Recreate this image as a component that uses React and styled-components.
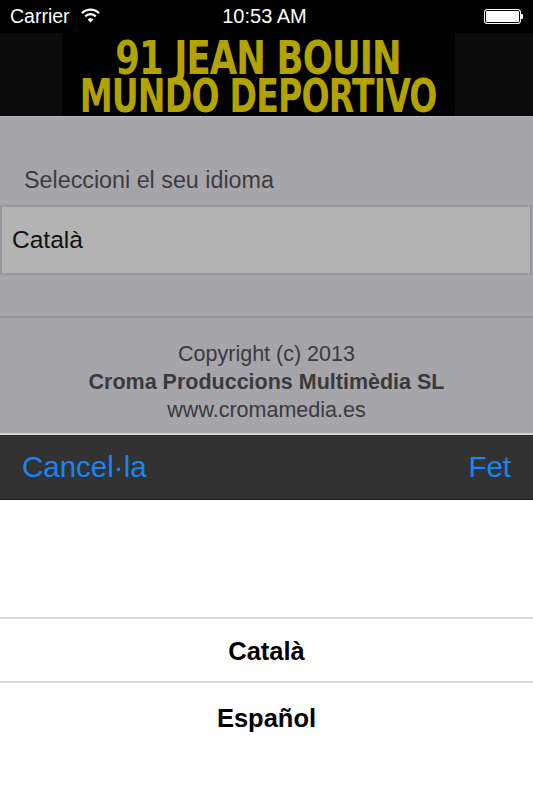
import styled, { createGlobalStyle } from "styled-components";

const GlobalStyle = createGlobalStyle`
	*, *::before, *::after {
		box-sizing: border-box;
	}
	html, body {
		margin: 0;
		padding: 0;
		background: #ffffff;
	}
	body {
		font-family: "Liberation Sans", Arial, sans-serif;
	}
`;

const App = () => {
	return (
		<Screen>
			<GlobalStyle />
			<StatusBar>
				<Carrier>
					Carrier
					<WifiIcon />
				</Carrier>
				<Clock>10:53 AM</Clock>
				<Battery>
					<BatteryBody />
					<BatteryTip />
				</Battery>
			</StatusBar>
			<Banner>
				<BannerSide />
				<Logo>
					<LogoLine $scale={0.855}>91 JEAN BOUIN</LogoLine>
					<LogoLine $scale={0.8}>MUNDO DEPORTIVO</LogoLine>
				</Logo>
				<BannerSide />
			</Banner>
			<Content>
				<FieldLabel>Seleccioni el seu idioma</FieldLabel>
				<FieldBox>Català</FieldBox>
				<Separator />
				<Credits>
					<span>Copyright (c) 2013</span>
					<strong>Croma Produccions Multimèdia SL</strong>
					<span>www.cromamedia.es</span>
				</Credits>
			</Content>
			<Toolbar>
				<ToolbarButton>Cancel·la</ToolbarButton>
				<ToolbarButton>Fet</ToolbarButton>
			</Toolbar>
			<Picker>
				<PickerSpacer />
				<PickerRow $selected>Català</PickerRow>
				<PickerRow>Español</PickerRow>
			</Picker>
		</Screen>
	);
};

const WifiIcon = () => (
	<svg width="19" height="15" viewBox="0 0 19 15">
		<path d="M1 5.2 A12 12 0 0 1 18 5.2" stroke="#fff" strokeWidth="2.2" fill="none" />
		<path d="M4.2 8.4 A7.5 7.5 0 0 1 14.8 8.4" stroke="#fff" strokeWidth="2.2" fill="none" />
		<path d="M9.5 14.5 L6.6 11.5 A4 4 0 0 1 12.4 11.5 Z" fill="#fff" />
	</svg>
);

// Styled Components
const Screen = styled.div`
	width: 533px;
	height: 800px;
	display: flex;
	flex-direction: column;
	overflow: hidden;
	background: #ffffff;
`;

const StatusBar = styled.div`
	height: 33px;
	flex-shrink: 0;
	background: #000;
	color: #fff;
	display: grid;
	grid-template-columns: 1fr auto 1fr;
	align-items: center;
	padding: 0 10px;
	font-size: 19.5px;
`;

const Carrier = styled.div`
	display: flex;
	align-items: center;
	gap: 11px;
	& svg {
		margin-top: -2px;
	}
`;

const Clock = styled.div`
	font-size: 20px;
	margin-left: -4px;
`;

const Battery = styled.div`
	justify-self: end;
	display: flex;
	align-items: center;
`;

const BatteryBody = styled.div`
	width: 37px;
	height: 15px;
	border: 1px solid #fff;
	border-radius: 3px;
	background: #fff;
	box-shadow: inset 0 0 0 1px #000;
`;

const BatteryTip = styled.div`
	width: 2px;
	height: 5px;
	background: #fff;
	border-radius: 0 1px 1px 0;
`;

const Banner = styled.div`
	height: 83px;
	flex-shrink: 0;
	display: grid;
	grid-template-columns: 62px minmax(0, 1fr) 78px;
	background: #000;
`;

const BannerSide = styled.div`
	background: #0b0b0b;
`;

const Logo = styled.div`
	min-width: 0;
	display: flex;
	flex-direction: column;
	align-items: center;
	justify-content: center;
	padding: 4px 0 0 0;
	gap: 2px;
`;

const LogoLine = styled.div`
	font-family: "DejaVu Sans Condensed", "DejaVu Sans", sans-serif;
	font-weight: bold;
	font-size: 46px;
	line-height: 36px;
	color: #b3a300;
	white-space: nowrap;
	letter-spacing: -1px;
	transform: scaleX(${(p) => p.$scale});
`;

const Content = styled.div`
	height: 317px;
	flex-shrink: 0;
	background: #a6a5aa;
	border-top: 1px solid #b4b3b7;
	display: flex;
	flex-direction: column;
`;

const FieldLabel = styled.div`
	padding: 50px 24px 0;
	height: 88px;
	font-size: 23.3px;
	color: #3c3c3e;
`;

const FieldBox = styled.div`
	height: 70px;
	margin: 0 1px 0 0;
	background: #b3b3b3;
	border: 2px solid #98979b;
	display: flex;
	align-items: center;
	padding: 0 10px;
	font-size: 24.5px;
	color: #111;
`;

const Separator = styled.div`
	margin-top: 41px;
	height: 2px;
	background: #949398;
`;

const Credits = styled.div`
	display: flex;
	flex-direction: column;
	align-items: center;
	padding-top: 22px;
	font-size: 21.5px;
	line-height: 28px;
	color: #3a3a3c;
	& strong {
		font-weight: bold;
		font-size: 21.5px;
	}
`;

const Toolbar = styled.div`
	height: 67px;
	flex-shrink: 0;
	background: #323232;
	border-top: 2px solid #d4d4d6;
	border-bottom: 1px solid #1a1a1a;
	display: flex;
	justify-content: space-between;
	align-items: center;
	padding: 0 22px;
`;

const ToolbarButton = styled.div`
	font-size: 29.5px;
	color: #1b84f2;
	margin-top: -1px;
`;

const Picker = styled.div`
	flex: 1;
	background: #fff;
	display: flex;
	flex-direction: column;
`;

const PickerSpacer = styled.div`
	height: 119px;
	border-bottom: 2px solid #d9d9d9;
`;

const PickerRow = styled.div`
	height: 64px;
	display: flex;
	align-items: center;
	justify-content: center;
	font-size: 25.5px;
	font-weight: bold;
	color: #000;
	border-bottom: ${(p) => (p.$selected ? "2px solid #d9d9d9" : "none")};
	padding-top: ${(p) => (p.$selected ? "2px" : "6px")};
`;

export default App;
